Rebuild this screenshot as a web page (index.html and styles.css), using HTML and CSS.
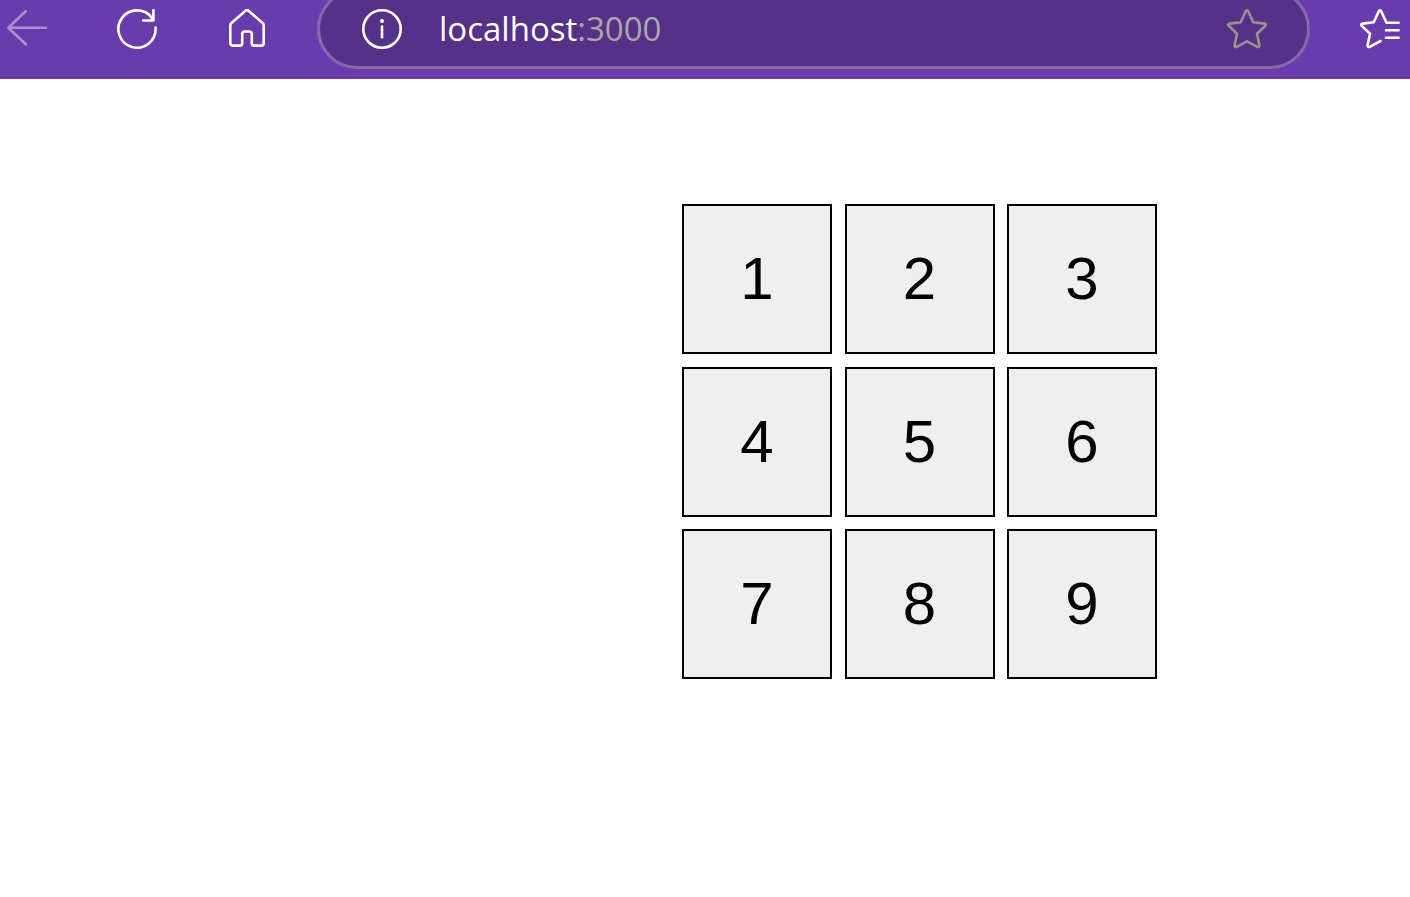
FILE: index.html
```html
<!DOCTYPE html>
<html lang="en">
<head>
<meta charset="utf-8">
<meta name="viewport" content="width=device-width, initial-scale=1">
<title>localhost:3000</title>
<link rel="stylesheet" href="styles.css">
</head>
<body>
<header class="toolbar">
  <nav class="nav">
    <button class="icon-button icon-button--faded" type="button" aria-label="Back">
      <svg class="icon" viewBox="0 0 40 40"><path d="M39 18.7H1.5M18.7 2.3L1.3 18.7l17.4 16.6"/></svg>
    </button>
    <button class="icon-button" type="button" aria-label="Refresh">
      <svg class="icon" viewBox="0 0 40 40"><path d="M38.55 18.6A18.6 18.6 0 1 1 35.5 9.72M36.4 1.2v10.3H26.2"/></svg>
    </button>
    <button class="icon-button" type="button" aria-label="Home">
      <svg class="icon" viewBox="0 0 40 40"><path d="M18.5 1.8Q20 .4 21.5 1.8L35.8 14.2Q36.7 15 36.7 16.2V34Q36.7 36.6 34.2 36.6H27Q24.8 36.6 24.8 34.2V25Q24.8 22.5 22.4 22.5H17.6Q15.2 22.5 15.2 25V34.2Q15.2 36.6 13 36.6H5.8Q3.3 36.6 3.3 34V16.2Q3.3 15 4.2 14.2Z"/></svg>
    </button>
  </nav>
  <div class="address">
    <button class="icon-button" type="button" aria-label="Site information">
      <svg class="icon" viewBox="0 0 40 40"><circle cx="20" cy="20" r="18.7"/><path d="M20 17.5V28.3"/><circle class="dot" cx="20" cy="12" r="2"/></svg>
    </button>
    <div class="url" role="textbox" aria-label="Address" contenteditable="true" spellcheck="false">localhost<span class="port">:3000</span></div>
    <button class="icon-button icon-button--grey" type="button" aria-label="Add to favorites">
      <svg class="icon" viewBox="0 0 40 40"><path d="M18.8 2.2Q20 .6 21.2 2.2L26.3 13.3 37.6 14.6Q39.6 15.2 38.4 16.8L30 24.8 32.4 36.3Q32.4 38.6 30.3 37.9L20 32.3 9.7 37.9Q7.6 38.6 7.6 36.3L10 24.8 1.6 16.8Q.4 15.2 2.4 14.6L13.7 13.3Z"/></svg>
    </button>
  </div>
  <button class="icon-button" type="button" aria-label="Favorites">
    <svg class="icon" viewBox="0 0 40 40"><path d="M20.5 32L9.7 37.9Q7.6 38.6 7.6 36.3L10 24.8 1.6 16.8Q.4 15.2 2.4 14.6L13.7 13.3 18.8 2.2Q20 .6 21.2 2.2L26.5 13.7H38.6M26 21.3H38.6M26 28.8H38.6"/></svg>
  </button>
</header>
<main class="page">
  <div class="keypad">
    <button class="key" type="button">1</button>
    <button class="key" type="button">2</button>
    <button class="key" type="button">3</button>
    <button class="key" type="button">4</button>
    <button class="key" type="button">5</button>
    <button class="key" type="button">6</button>
    <button class="key" type="button">7</button>
    <button class="key" type="button">8</button>
    <button class="key" type="button">9</button>
  </div>
</main>
</body>
</html>
```
FILE: styles.css
```css
* {
  box-sizing: border-box;
}

body {
  margin: 0;
  background: #fff;
  font-family: "Liberation Sans", Arial, sans-serif;
}

/* The toolbar is cut off by the top edge of the window. */
.toolbar {
  display: flex;
  align-items: center;
  gap: 50px;
  margin-top: -11px;
  padding: 0 10px 10px 7px;
  background: #6a3bad;
}

.nav {
  display: flex;
  gap: 70px;
}

.icon-button {
  flex: none;
  width: 40px;
  height: 40px;
  padding: 0;
  border: 0;
  background: none;
  color: #fff;
}

.icon-button--faded {
  color: #ab8fd0;
}

.icon-button--grey {
  color: #98948f;
}

.icon {
  display: block;
  width: 40px;
  height: 40px;
  fill: none;
  stroke: currentColor;
  stroke-width: 2.6;
  stroke-linecap: round;
  stroke-linejoin: round;
}

.dot {
  fill: currentColor;
  stroke: none;
}

.address {
  display: flex;
  flex: 1;
  align-items: center;
  height: 80px;
  padding: 0 40px 0 42px;
  border: 3px solid #856aab;
  border-radius: 40px;
  background: #553188;
}

.url {
  flex: 1;
  margin-left: 37px;
  outline: 0;
  color: #fff;
  font: 33px/48px "Open Sans", "Noto Sans", sans-serif;
}

.port {
  color: #aaa8a8;
}

.page {
  display: flex;
  justify-content: flex-end;
  padding: 125px 253px 0 0;
}

.keypad {
  display: grid;
  grid-template-columns: repeat(3, 150px);
  grid-auto-rows: 150px;
  justify-content: space-between;
  align-content: space-between;
  width: 475px;
  height: 475px;
}

.key {
  padding: 0;
  border: 2px solid #000;
  background: #efefef;
  color: #000;
  font: 60px/1 "Liberation Sans", Arial, sans-serif;
}
```
